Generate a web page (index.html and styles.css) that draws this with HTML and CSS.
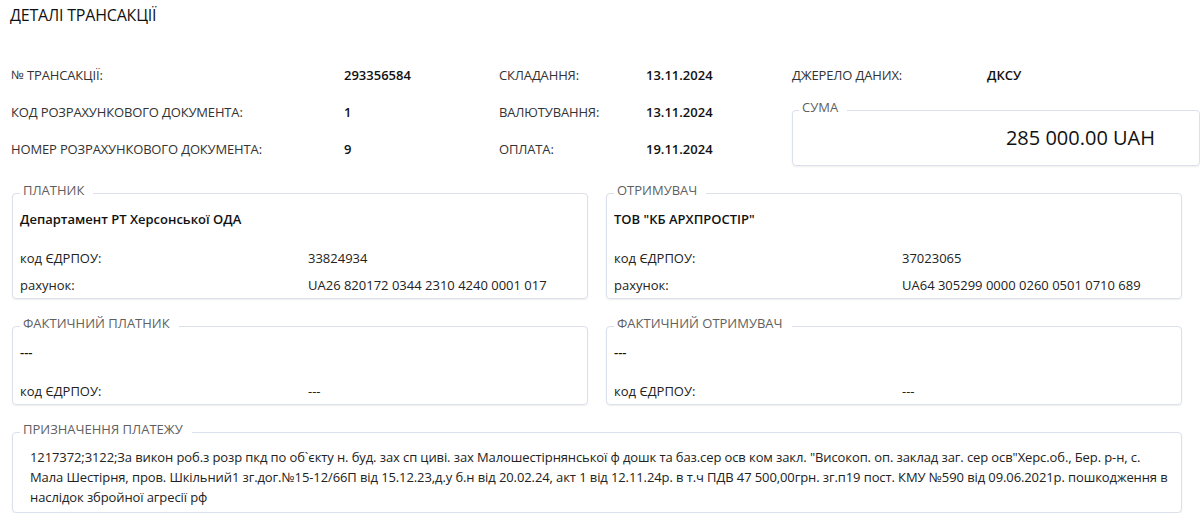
FILE: index.html
```html
<!DOCTYPE html>
<html lang="uk">
<head>
  <meta charset="UTF-8" />
  <meta name="viewport" content="width=device-width, initial-scale=1.0" />
  <title>Деталі трансакції</title>
  <link rel="stylesheet" href="styles.css">
</head>
<body>
  <div class="page">
    <h1 class="title">ДЕТАЛІ ТРАНСАКЦІЇ</h1>

    <!-- Основні реквізити -->
    <div class="summary">
      <div class="label"><span class="num">№</span>&nbsp;ТРАНСАКЦІЇ:</div>
      <div class="value">293356584</div>
      <div class="label">СКЛАДАННЯ:</div>
      <div class="value">13.11.2024</div>

      <div class="side">
        <div class="source">
          <div class="label source-label">ДЖЕРЕЛО ДАНИХ:</div>
          <div class="value">ДКСУ</div>
        </div>
        <fieldset class="box sum-box">
          <legend>СУМА</legend>
          <div class="amount">285 000.00 UAH</div>
        </fieldset>
      </div>

      <div class="label">КОД РОЗРАХУНКОВОГО ДОКУМЕНТА:</div>
      <div class="value">1</div>
      <div class="label">ВАЛЮТУВАННЯ:</div>
      <div class="value">13.11.2024</div>

      <div class="label">НОМЕР РОЗРАХУНКОВОГО ДОКУМЕНТА:</div>
      <div class="value">9</div>
      <div class="label">ОПЛАТА:</div>
      <div class="value">19.11.2024</div>
    </div>

    <!-- Сторони платежу -->
    <div class="parties">
      <fieldset class="box">
        <legend>ПЛАТНИК</legend>
        <div class="name">Департамент РТ Херсонської ОДА</div>
        <div class="kv first"><span>код ЄДРПОУ:</span><span>33824934</span></div>
        <div class="kv"><span>рахунок:</span><span>UA26 820172 0344 2310 4240 0001 017</span></div>
      </fieldset>

      <fieldset class="box">
        <legend>ОТРИМУВАЧ</legend>
        <div class="name">ТОВ "КБ АРХПРОСТІР"</div>
        <div class="kv first"><span>код ЄДРПОУ:</span><span>37023065</span></div>
        <div class="kv"><span>рахунок:</span><span>UA64 305299 0000 0260 0501 0710 689</span></div>
      </fieldset>

      <fieldset class="box">
        <legend>ФАКТИЧНИЙ ПЛАТНИК</legend>
        <div class="name">---</div>
        <div class="kv first"><span>код ЄДРПОУ:</span><span>---</span></div>
      </fieldset>

      <fieldset class="box">
        <legend>ФАКТИЧНИЙ ОТРИМУВАЧ</legend>
        <div class="name">---</div>
        <div class="kv first"><span>код ЄДРПОУ:</span><span>---</span></div>
      </fieldset>
    </div>

    <fieldset class="box purpose">
      <legend>ПРИЗНАЧЕННЯ ПЛАТЕЖУ</legend>
      <div class="purpose-text">1217372;3122;За викон роб.з розр пкд по об`єкту н. буд. зах сп циві. зах Малошестірнянської ф дошк та баз.сер осв ком закл. "Високоп. оп. заклад заг. сер осв"Херс.об., Бер. р-н, с. Мала Шестірня, пров. Шкільний1 зг.дог.№15-12/66П від 15.12.23,д.у б.н від 20.02.24, акт 1 від 12.11.24р. в т.ч ПДВ 47 500,00грн. зг.п19 пост. КМУ №590 від 09.06.2021р. пошкодження в наслідок збройної агресії рф</div>
    </fieldset>
  </div>
</body>
</html>
```

FILE: styles.css
```css
body {
  margin: 0;
  background-color: #fff;
  color: #222;
  font-family: "Open Sans", "Noto Sans", Arial, sans-serif;
  font-size: 13px;
  overflow: hidden;
}
.page {
  padding-left: 11px;
}
.title {
  margin: 4px 0 0 -1px;
  font-size: 16px;
  font-weight: 400;
  line-height: 22px;
  letter-spacing: -0.2px;
  color: #111;
}
.num {
  font-family: "Liberation Sans", Arial, sans-serif;
  font-size: 12px;
}

/* верхній блок з реквізитами */
.summary {
  display: grid;
  grid-template-columns: 333px 155px 147px 146px 408px;
  grid-template-rows: repeat(3, 37px);
  margin-top: 30px;
}
.label,
.value {
  display: flex;
  align-items: center;
  color: #333;
}
.label {
  letter-spacing: -0.15px;
}
.value {
  font-weight: 600;
  color: #111;
}
.side {
  grid-column: 5;
  grid-row: 1 / span 3;
  display: flex;
  flex-direction: column;
}
.source {
  display: flex;
  height: 37px;
}
.source-label {
  width: 195px;
}

/* рамки з підписом */
.box {
  margin: 0;
  padding: 5px 10px 4px 7px;
  border: 1px solid #dcdfec;
  border-radius: 4px;
  box-shadow: 0 1px 2px rgba(0, 0, 0, 0.07);
  min-width: 0;
  box-sizing: border-box;
}
.box legend {
  padding: 0 9px 6px 3px;
  line-height: 18px;
  color: #5f5f5f;
}
.sum-box {
  margin-top: 5px;
  padding: 2px 44px 13px 6px;
}
.amount {
  text-align: right;
  font-size: 20px;
  line-height: 28px;
  color: #111;
}

.parties {
  display: grid;
  grid-template-columns: 576px 576px;
  column-gap: 18px;
  row-gap: 15px;
  width: 1170px;
  margin: 14px 0 0 1px;
}
.name {
  line-height: 18px;
  font-weight: 600;
  color: #111;
}
.kv {
  display: grid;
  grid-template-columns: 288px 1fr;
  line-height: 18px;
  margin-top: 9px;
  color: #222;
}
.kv.first {
  margin-top: 21px;
}

.purpose {
  width: 1170px;
  margin: 15px 0 0 1px;
  padding-bottom: 5px;
}
.purpose-text {
  margin-top: -2px;
  padding-left: 10px;
  line-height: 20px;
  letter-spacing: -0.1px;
  color: #222;
}
```
